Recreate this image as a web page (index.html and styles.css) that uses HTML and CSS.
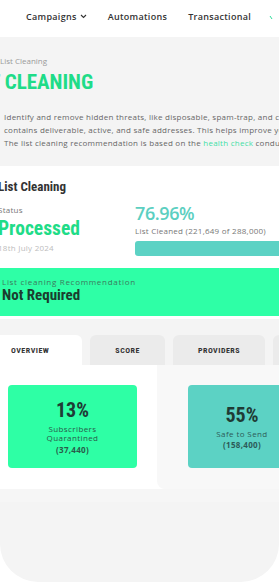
FILE: index.html
```html
<!DOCTYPE html>
<html lang="en">
<head>
<meta charset="utf-8">
<title>List Cleaning</title>
<link rel="stylesheet" href="styles.css">
</head>
<body>
<div class="screen">
  <nav class="topnav">
    <span class="nav-item">Campaigns
      <svg class="chev" width="7" height="5" viewBox="0 0 7 5"><path d="M1 1l2.5 2.5L6 1" fill="none" stroke="#333" stroke-width="1.1"/></svg>
    </span>
    <span class="nav-item">Automations</span>
    <span class="nav-item">Transactional</span>
    <svg class="nav-mark" width="4" height="5" viewBox="0 0 4 5"><path d="M1 1l2 3" stroke="#2edc9a" stroke-width="1"/></svg>
  </nav>

  <main class="content">
    <div class="crumb">List Cleaning</div>
    <h1 class="title">LIST CLEANING</h1>
    <p class="intro">Identify and remove hidden threats, like disposable, spam-trap, and catch-all emails,<br>contains deliverable, active, and safe addresses. This helps improve your sender<br>The list cleaning recommendation is based on the <a class="link" href="#">health check</a> conducted</p>

    <section class="card">
      <h2 class="card-title">List Cleaning</h2>
      <div class="stats">
        <div class="status">
          <div class="label">Status</div>
          <div class="status-value">Processed</div>
          <div class="date">18th July 2024</div>
        </div>
        <div class="progress">
          <div class="percent">76.96%</div>
          <div class="label">List Cleaned (221,649 of 288,000)</div>
          <div class="bar"><div class="bar-fill" style="width:100%"></div></div>
        </div>
      </div>
      <div class="reco">
        <div class="reco-label">List cleaning Recommendation</div>
        <div class="reco-value">Not Required</div>
      </div>
    </section>

    <div class="tabs">
      <div class="tab tab--active">OVERVIEW</div>
      <div class="tab">SCORE</div>
      <div class="tab">PROVIDERS</div>
      <div class="tab">DOMAINS</div>
    </div>

    <section class="panel">
      <div class="panel-col">
        <div class="metric metric--green">
          <div class="metric-num">13%</div>
          <div class="metric-text">Subscribers<br>Quarantined</div>
          <div class="metric-count">(37,440)</div>
        </div>
      </div>
      <div class="panel-col panel-col--alt">
        <div class="metric metric--teal">
          <div class="metric-num">55%</div>
          <div class="metric-text">Safe to Send</div>
          <div class="metric-count">(158,400)</div>
        </div>
      </div>
    </section>
    <div class="below"></div>
  </main>
</div>
</body>
</html>
```
FILE: styles.css
```css
html, body {
  margin: 0;
  padding: 0;
  background: #ffffff;
}
body {
  font-family: "Open Sans", "DejaVu Sans", sans-serif;
  overflow: hidden;
}
.screen {
  width: 279px;
  height: 582px;
  overflow: hidden;
  background: #f4f4f4;
  border-radius: 0 0 38px 38px;
}
.topnav {
  height: 37px;
  box-sizing: border-box;
  padding: 0 0 5px 26px;
  background: #ffffff;
  display: flex;
  align-items: center;
  gap: 21px;
  white-space: nowrap;
}
.nav-item {
  display: flex;
  align-items: center;
  gap: 3px;
  font-size: 9px;
  font-weight: 600;
  letter-spacing: 0.3px;
  color: #333333;
}
.chev { margin-top: 1px; }
.nav-mark { margin-left: -3px; margin-top: 2px; }

.content {
  width: 360px;
}
.crumb {
  margin-top: 19px;
  font-size: 8px;
  line-height: 10px;
  color: #9a9a9a;
}
.title {
  margin: 4px 0 0 -38px;
  font-family: "Liberation Sans Narrow", "Roboto Condensed", Roboto, sans-serif;
  font-weight: 700;
  font-size: 21px;
  line-height: 24px;
  color: #1fdc88;
  white-space: nowrap;
}
.intro {
  margin: 16px 0 0 4px;
  font-size: 8px;
  line-height: 13px;
  letter-spacing: 0.25px;
  color: #666666;
  white-space: nowrap;
}
.link {
  color: #3fdfa6;
  text-decoration: none;
}

.card {
  margin-top: 17px;
  margin-left: -2px;
  background: #ffffff;
  padding: 13px 0 3px;
}
.card-title {
  margin: 0;
  font-family: "Liberation Sans Narrow", "Roboto Condensed", Roboto, sans-serif;
  font-weight: 700;
  font-size: 13px;
  line-height: 16px;
  color: #333333;
}
.stats {
  display: grid;
  grid-template-columns: 137px 1fr;
  margin-top: 7px;
}
.status {
  padding-top: 2.5px;
}
.label {
  font-size: 8px;
  line-height: 10px;
  letter-spacing: 0.25px;
  color: #777777;
  white-space: nowrap;
}
.status-value {
  margin-top: 3.5px;
  font-family: "Liberation Sans Narrow", "Roboto Condensed", Roboto, sans-serif;
  font-weight: 700;
  font-size: 19.5px;
  line-height: 22px;
  color: #1fdc88;
}
.date {
  margin-top: 2.5px;
  font-size: 8px;
  line-height: 10px;
  letter-spacing: 0.25px;
  color: #bdbdbd;
}
.percent {
  font-size: 18px;
  font-weight: 600;
  line-height: 22px;
  letter-spacing: -0.4px;
  color: #5ccfc1;
}
.progress .label {
  margin-top: 2px;
}
.bar {
  margin-top: 5px;
  height: 15px;
  border-radius: 3px;
  background: #e6e6e6;
  overflow: hidden;
}
.bar-fill {
  height: 100%;
  background: #5cd2c4;
}
.reco {
  margin-top: 12px;
  height: 48px;
  box-sizing: border-box;
  padding: 8.7px 0 0 4px;
  background: #2effa6;
}
.reco-label {
  font-size: 8px;
  line-height: 10px;
  letter-spacing: 0.7px;
  color: #3d7a5d;
  white-space: nowrap;
}
.reco-value {
  margin-top: 0.6px;
  font-family: "Liberation Sans Narrow", "Roboto Condensed", Roboto, sans-serif;
  font-weight: 700;
  font-size: 15px;
  line-height: 17px;
  color: #1b3d2e;
}

.tabs {
  display: flex;
  gap: 8px;
  margin: 16px 0 0 -14px;
}
.tab {
  height: 30px;
  padding: 0 25px;
  display: flex;
  align-items: center;
  border-radius: 6px 6px 0 0;
  background: #ebebeb;
  font-family: "Liberation Sans Narrow", "Roboto Condensed", Roboto, sans-serif;
  font-weight: 700;
  font-size: 8px;
  letter-spacing: 0.5px;
  color: #333333;
  white-space: nowrap;
}
.tab--active {
  background: #ffffff;
  padding-right: 33px;
}

.panel {
  display: flex;
  height: 124px;
  background: #ffffff;
}
.panel-col {
  width: 157px;
  box-sizing: border-box;
  padding: 20px 0 0 8px;
}
.panel-col--alt {
  flex: 1;
  padding-left: 31px;
  background: #f8f8f8;
  border-radius: 0 0 0 8px;
}
.metric {
  width: 129px;
  height: 83px;
  border-radius: 4px;
  display: flex;
  flex-direction: column;
  align-items: center;
  justify-content: center;
  text-align: center;
  color: #2a5a4a;
}
.metric--green { background: #2effa5; }
.metric--teal { background: #5cd2c4; width: 108px; color: #2d5b59; }
.metric-num {
  font-family: "Liberation Sans Narrow", "Roboto Condensed", Roboto, sans-serif;
  font-weight: 700;
  font-size: 20px;
  line-height: 22px;
  color: #1f3b35;
  margin-bottom: 3px;
}
.metric-text {
  font-size: 8px;
  line-height: 9.5px;
  letter-spacing: 0.4px;
  white-space: nowrap;
}
.metric-count {
  margin-top: 2px;
  font-size: 8px;
  line-height: 9.5px;
  font-weight: 700;
  letter-spacing: 0.3px;
}
.below {
  height: 13px;
  background: #f6f6f6;
}
```
